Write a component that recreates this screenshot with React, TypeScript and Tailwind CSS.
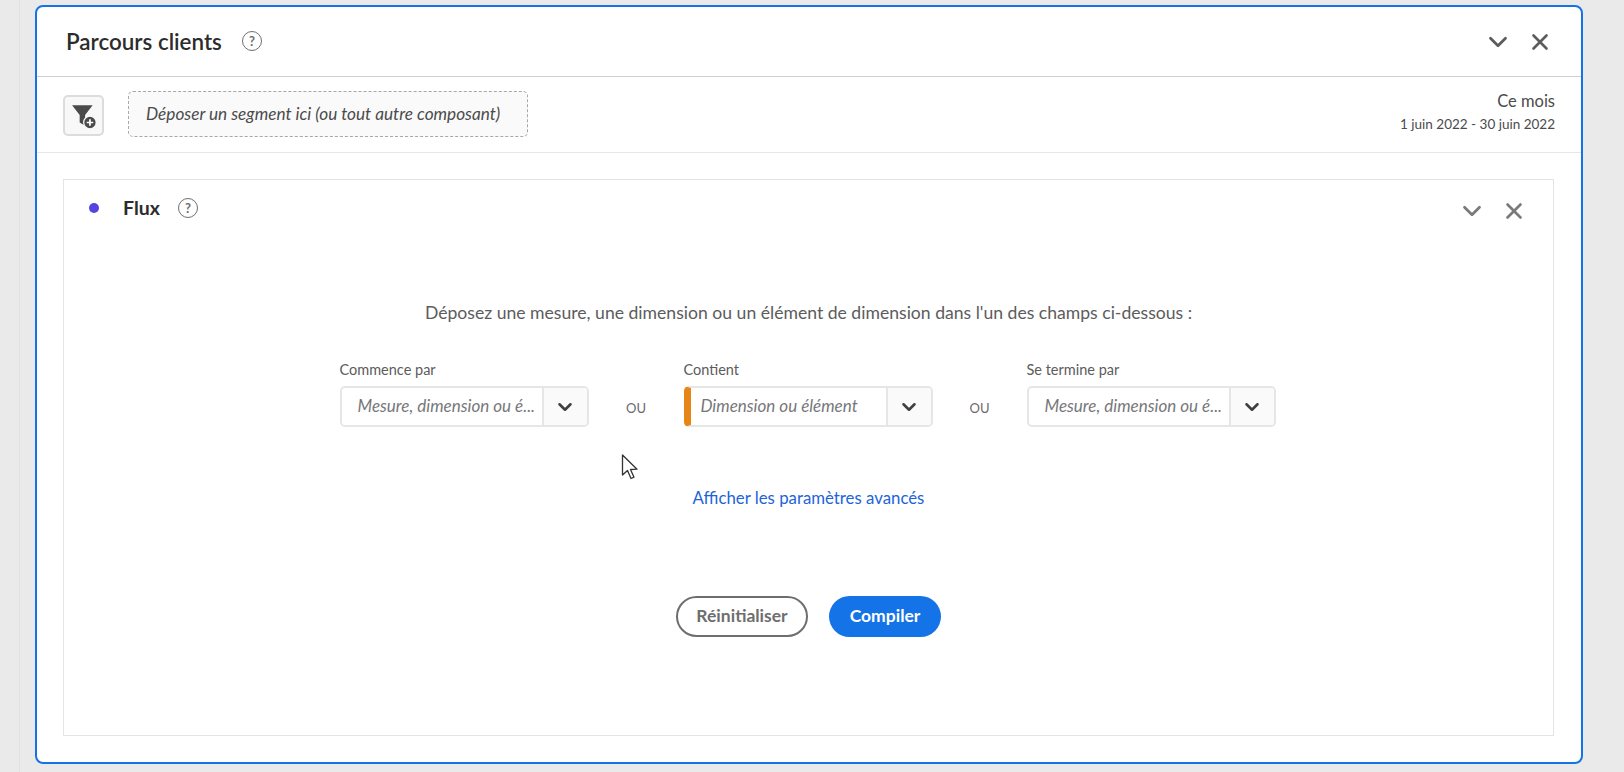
import { ChevronDown, X } from "lucide-react";

const font = "font-['Lato','Noto_Sans',sans-serif]";

const HelpIcon = () => (
  <span className="flex h-5 w-5 items-center justify-center rounded-full border-[1.5px] border-[#6e6e6e] text-[13px] font-bold leading-none text-[#6e6e6e]">
    ?
  </span>
);

const PanelActions = ({ color }: { color: string }) => (
  <div className="flex items-center gap-[14px]" style={{ color }}>
    <ChevronDown size={30} strokeWidth={2.2} />
    <X size={26} strokeWidth={2.4} />
  </div>
);

const FilterIcon = () => (
  <svg width="26" height="26" viewBox="0 0 24 24">
    <path d="M1 2h19l-7 9v10l-5-3v-7z" fill="#4b4b4b" />
    <circle cx="17.5" cy="18" r="5.8" fill="#4b4b4b" stroke="#f8f8f8" strokeWidth="1.2" />
    <path d="M17.5 15v6M14.5 18h6" stroke="#fff" strokeWidth="1.6" />
  </svg>
);

const Field = ({
  label,
  placeholder,
  accent,
}: {
  label: string;
  placeholder: string;
  accent?: boolean;
}) => (
  <div className="w-[249px]">
    <div className="mb-[7px] h-[18px] text-[14.5px] leading-[18px] text-[#5c5c5c]">{label}</div>
    <div
      className={
        accent
          ? "flex h-[41px] overflow-hidden rounded-[5px] border-2 border-l-[7px] border-[#e6e6e6] border-l-[#e68619]"
          : "flex h-[41px] overflow-hidden rounded-[5px] border-2 border-[#e6e6e6]"
      }
    >
      <div
        className={
          accent
            ? "flex-1 truncate pl-[10px] text-[17px] italic leading-[35px] text-[#77777a]"
            : "flex-1 truncate pl-4 text-[17px] italic leading-[35px] text-[#77777a]"
        }
      >
        {placeholder}
      </div>
      <div className="flex w-[45px] shrink-0 items-center justify-center border-l-2 border-[#e6e6e6] bg-[#fafafa] text-[#3f3f3f]">
        <ChevronDown size={22} strokeWidth={2.8} />
      </div>
    </div>
  </div>
);

const Ou = ({ width }: { width: string }) => (
  <div className={`${width} flex h-[41px] items-center justify-center pt-[4px] text-[13px] text-[#6a6a6a]`}>
    OU
  </div>
);

export default function App() {
  return (
    <div className={`${font} relative h-[772px] w-[1624px] overflow-hidden bg-[#eaeaea]`}>
      <div className="absolute bottom-0 left-[19px] top-0 w-px bg-[#e2e2e2]" />

      <div className="pl-[35px] pt-[5px]">
        <div className="flex h-[759px] w-[1548px] flex-col overflow-hidden rounded-[8px] border-[2.5px] border-[#1473e6] bg-white">
          {/* Header */}
          <div className="flex h-[70px] shrink-0 items-center justify-between border-b-[1.5px] border-[#cfcfcf] pl-[29px] pr-[28px]">
            <div className="flex items-center gap-5">
              <h1 className="text-[22.4px] font-semibold text-[#2c2c2c]">Parcours clients</h1>
              <HelpIcon />
            </div>
            <PanelActions color="#5c5c5c" />
          </div>

          {/* Segment bar */}
          <div className="flex h-[76px] shrink-0 items-center justify-between border-b border-[#e6e6e6] pl-[26px] pr-[26px]">
            <div className="mb-[2px] flex items-center gap-[24px]">
              <button className="mt-1 flex h-[41px] w-[41px] items-center justify-center rounded-[5px] border-2 border-[#dcdcdc] bg-[#f8f8f8]">
                <FilterIcon />
              </button>
              <div className="flex h-[46px] w-[400px] items-center rounded-[5px] border border-dashed border-[#a8a8a8] bg-[#fafafa] pl-[17px] text-[17.2px] italic text-[#4b4b4b]">
                Déposer un segment ici (ou tout autre composant)
              </div>
            </div>
            <div className="pb-[6px] text-right text-[#4b4b4b]">
              <div className="text-[16.5px] leading-[24px]">Ce mois</div>
              <div className="text-[13.5px] leading-[22px]">1 juin 2022 - 30 juin 2022</div>
            </div>
          </div>

          {/* Inner panel */}
          <div className="flex-1 pb-[26px] pl-[26px] pr-[27px] pt-[26px]">
            <div className="flex h-full flex-col border-[1.5px] border-[#e4e4e4]">
              <div className="flex h-[56px] shrink-0 items-center justify-between pl-[25px] pr-[26px]">
                <div className="flex items-center">
                  <span className="h-[10px] w-[10px] rounded-full bg-[#5544dd]" />
                  <span className="ml-[24px] text-[19.5px] font-bold text-[#2c2c2c]">Flux</span>
                  <span className="ml-[18px]">
                    <HelpIcon />
                  </span>
                </div>
                <div className="mt-[6px]">
                  <PanelActions color="#7a7a7a" />
                </div>
              </div>

              <div className="flex flex-col items-center pt-[64px]">
                <p className="text-[17.6px] leading-[26px] text-[#5c5c5c]">
                  Déposez une mesure, une dimension ou un élément de dimension dans l'un des champs ci-dessous :
                </p>
                <div className="mr-[2px] mt-[35px] flex items-end">
                  <Field label="Commence par" placeholder="Mesure, dimension ou é..." />
                  <Ou width="w-[95px]" />
                  <Field label="Contient" placeholder="Dimension ou élément" accent />
                  <Ou width="w-[94px]" />
                  <Field label="Se termine par" placeholder="Mesure, dimension ou é..." />
                </div>
                <a className="mt-[60px] text-[16.8px] leading-[22px] text-[#1d64d8]">
                  Afficher les paramètres avancés
                </a>
                <div className="mt-[87px] flex gap-[21px]">
                  <button className="h-[41px] w-[132px] rounded-full border-2 border-[#6e6e6e] text-[17.5px] font-bold text-[#6e6e6e]">
                    Réinitialiser
                  </button>
                  <button className="h-[41px] w-[112px] rounded-full bg-[#1473e6] text-[17.5px] font-bold text-white">
                    Compiler
                  </button>
                </div>
              </div>
            </div>
          </div>
        </div>
      </div>

      {/* Mouse cursor */}
      <svg className="absolute left-[621px] top-[454px]" width="18" height="26" viewBox="0 0 18 26">
        <path d="M1.5 1v20l5-4.5 3.5 8 3-1.3-3.5-7.7 6.5-.3z" fill="#fff" stroke="#333" strokeWidth="1.3" strokeLinejoin="round" />
      </svg>
    </div>
  );
}
